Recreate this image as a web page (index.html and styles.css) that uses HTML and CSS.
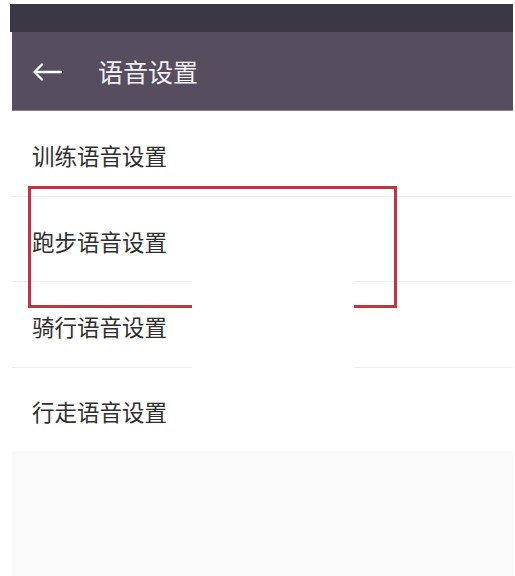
FILE: index.html
```html
<!DOCTYPE html>
<html lang="zh-CN">
<head>
<meta charset="utf-8">
<title>语音设置</title>
<link rel="stylesheet" href="styles.css">
</head>
<body>
<div class="screen">
  <div class="status-bar"></div>
  <div class="app">
    <header class="toolbar">
      <svg class="back" width="30" height="18" viewBox="0 0 30 18" aria-hidden="true">
        <path d="M29 9H3M10 1.5L2.5 9L10 16.5" fill="none" stroke="#fff" stroke-width="2.3" stroke-linecap="round" stroke-linejoin="round"/>
      </svg>
      <h1 class="title">语音设置</h1>
    </header>
    <ul class="list">
      <li class="row">训练语音设置</li>
      <li class="row">跑步语音设置</li>
      <li class="row">骑行语音设置</li>
      <li class="row">行走语音设置</li>
    </ul>
    <div class="footer"></div>
  </div>
</div>
<div class="highlight"></div>
<div class="mask"></div>
</body>
</html>
```

FILE: styles.css
```css
html, body {
  margin: 0;
  padding: 0;
  background: #ffffff;
}

body {
  font-family: "Noto Sans CJK SC", "Noto Sans", sans-serif;
  width: 515px;
  height: 576px;
  overflow: hidden;
  position: relative;
}

.screen {
  margin: 4px 2px 0 10px;
  display: flex;
  flex-direction: column;
}

.status-bar {
  height: 28px;
  background: #3b3744;
}

.app {
  margin-left: 2px;
  display: flex;
  flex-direction: column;
}

.toolbar {
  height: 78px;
  background: #564e5f;
  border-bottom: 1px solid #8a8591;
  display: flex;
  align-items: center;
  padding-left: 20px;
}

.back {
  display: block;
  margin-top: 2px;
}

.title {
  margin: 0 0 0 36px;
  font-size: 25px;
  font-weight: 400;
  color: #f4f2f5;
  line-height: 1;
}

.list {
  list-style: none;
  margin: 0;
  padding: 0;
}

.row {
  height: 85.5px;
  box-sizing: border-box;
  border-bottom: 1px solid #f0efef;
  display: flex;
  align-items: center;
  padding: 4px 0 0 20px;
  font-size: 22.5px;
  color: #2f2f2f;
}

.row:last-child {
  border-bottom: none;
  height: 83px;
}

.footer {
  height: 130px;
  background: #f9f9f9;
}

.highlight {
  position: absolute;
  left: 28px;
  top: 186px;
  width: 363px;
  height: 116px;
  border: 3px solid #c2343f;
}

.mask {
  position: absolute;
  left: 192px;
  top: 268px;
  width: 162px;
  height: 104px;
  background: #ffffff;
}
```
